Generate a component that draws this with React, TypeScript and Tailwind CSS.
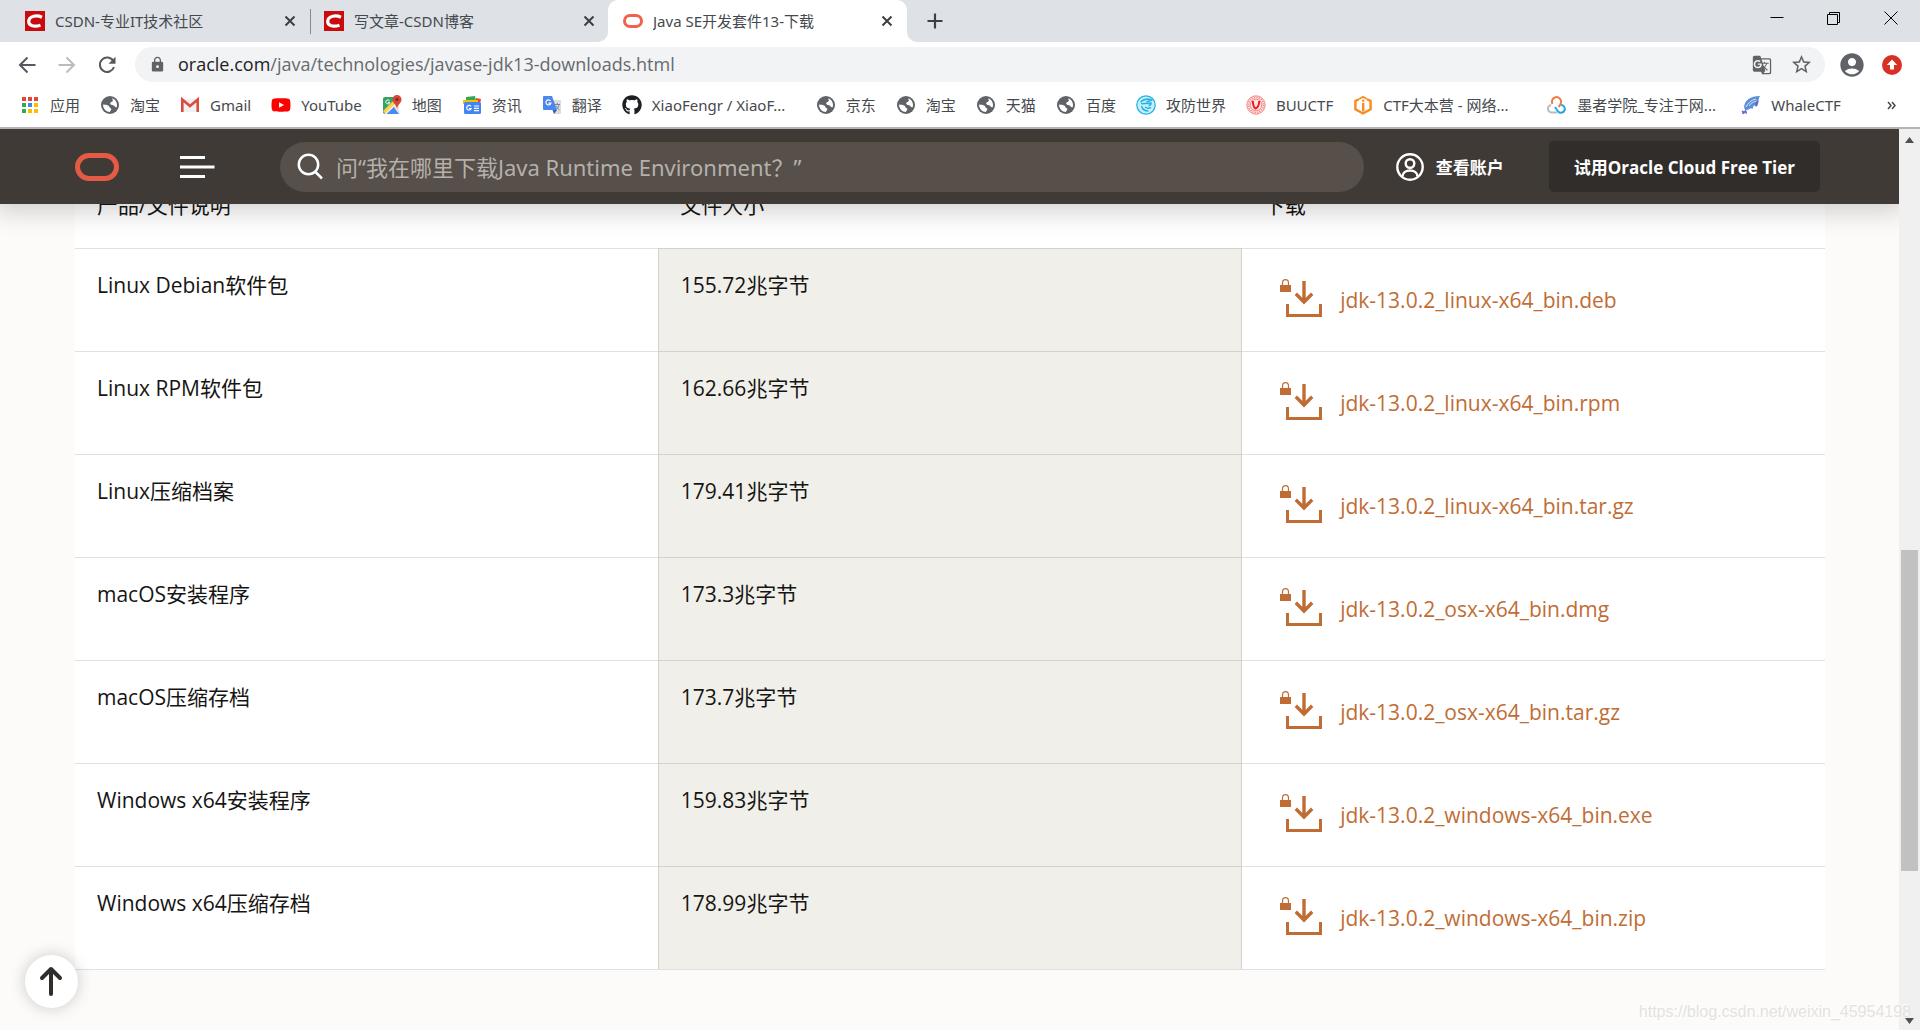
import type { ReactNode } from "react";
import { FaGithub, FaYoutube } from "react-icons/fa";
import { MdAccountCircle, MdGTranslate, MdLock, MdStarOutline } from "react-icons/md";

function CsdnIcon() {
  return (
    <svg width="20" height="20" viewBox="0 0 20 20">
      <rect width="20" height="20" fill="#c90b0e" />
      <path d="M17 6.2C12 3.8 4.3 4.6 3.7 10.2c-.4 4.900 5.800 6 11.800 4" fill="none" stroke="#fff" strokeWidth="3.200" />
    </svg>
  );
}

function OracleMark({ width, height, stroke, color }: { width: number; height: number; stroke: number; color: string }) {
  return (
    <svg width={width} height={height}>
      <rect
        x={stroke / 2}
        y={stroke / 2}
        width={width - stroke}
        height={height - stroke}
        rx={(height - stroke) / 2}
        fill="none"
        stroke={color}
        strokeWidth={stroke}
      />
    </svg>
  );
}

function CloseIcon() {
  return (
    <svg width="12" height="12" viewBox="0 0 12 12" stroke="#3c4043" strokeWidth="2">
      <path d="M1.500 1.500l9 9M10.500 1.500l-9 9" />
    </svg>
  );
}

function AppsIcon() {
  const colors = ["#ea4335", "#ea4335", "#ea4335", "#34a853", "#4285f4", "#fbbc05", "#34a853", "#fbbc05", "#fbbc05"];
  return (
    <svg width="18" height="18" viewBox="0 0 18 18">
      {colors.map((c, i) => (
        <rect key={i} x={1 + (i % 3) * 6} y={1 + Math.floor(i / 3) * 6} width="4" height="4" fill={c} />
      ))}
    </svg>
  );
}

function GlobeIcon() {
  return (
    <svg width="18" height="18" viewBox="0 0 18 18">
      <circle cx="9" cy="9" r="9" fill="#5f6368" />
      <path d="M11 2.200c3 .8 5 3.600 5 6.800 0 .8-.1 1.500-.4 2.200-1.200.2-1.800-.7-2.600-1.500-1-.9-2.700-.4-3.500-1.400-.7-1-.1-2 1-2.300 1-.3 1.600-.9 1.300-1.900-.2-.7-.7-1.200-.8-1.900z" fill="#fff" />
      <path d="M2 8.500c2 .2 4.200.2 5.600 1.300 1 .9.600 1.700 1.700 2.200 1.200.5 1.300 1.500.6 2.300-.6.6-.8 1.100-.9 1.700-3.900 0-7-3.200-7-7.500z" fill="#fff" />
    </svg>
  );
}

function GmailIcon() {
  return (
    <svg width="20" height="20" viewBox="0 0 20 20">
      <path d="M2 4h16v13H2z" fill="#f1f1f1" />
      <path d="M2.300 17V4.500L10 11l7.700-6.500V17" fill="none" stroke="#dd4b3e" strokeWidth="2.600" />
    </svg>
  );
}

function MapsIcon() {
  return (
    <svg width="20" height="20" viewBox="0 0 20 20">
      <rect x="1" y="2" width="16" height="17" rx="2" fill="#34a263" />
      <path d="M10 9l7-2v10a2 2 0 0 1-1 2z" fill="#e4e4e4" />
      <path d="M4 19l7-7.500 6 7.500z" fill="#4a8af4" />
      <path d="M1 16L12 5l3 3L3.500 19z" fill="#fbd04b" />
      <path d="M2.500 19L15 7l1 1L4.500 19z" fill="#f2f2f2" />
      <path d="M7.500 5.800a2 2 0 1 0 .3 1.600H6" fill="none" stroke="#fff" />
      <path d="M15 0a4.500 4.500 0 0 0-4.500 4.500c0 3.500 3.500 4.500 4.500 9 1-4.500 4.500-5.500 4.500-9A4.500 4.500 0 0 0 15 0z" fill="#dc4437" />
      <circle cx="15" cy="4.500" r="1.600" fill="#7d2720" />
    </svg>
  );
}

function NewsIcon() {
  return (
    <svg width="20" height="20" viewBox="0 0 20 20">
      <path d="M4 2l9-1 1 5H4z" fill="#34a853" />
      <path d="M14 3l5 1-1 5h-4z" fill="#ea4335" />
      <path d="M1 5h15v4H1z" fill="#fbbc05" />
      <rect x="2" y="7" width="17" height="12" rx="1.500" fill="#4285f4" />
      <path d="M9 11.500a2.300 2.300 0 1 0 .2 2H7M12 11h5M12 13.300h5M12 15.600h5" fill="none" stroke="#fff" strokeWidth="1.200" />
    </svg>
  );
}

function TranslateIcon() {
  return (
    <svg width="20" height="20" viewBox="0 0 20 20">
      <path d="M8 5h10a1 1 0 0 1 1 1v12a1 1 0 0 1-1 1h-6z" fill="#dcdcdc" />
      <path d="M1 2a1 1 0 0 1 1-1h8l5 14H2a1 1 0 0 1-1-1z" fill="#4a87ee" />
      <path d="M10.500 15l1.500 4 3-4z" fill="#2f5fc4" />
      <path d="M8.500 6a2.500 2.500 0 1 0 .3 2.200h-2.300" fill="none" stroke="#fff" strokeWidth="1.200" />
      <path d="M13 9.500h5M15.400 8v1.500M17 9.500c-.5 3-1.500 4-2.500 5M14.500 11c.5 2 1.500 3 3 4" fill="none" stroke="#7b8a98" />
    </svg>
  );
}

function AttackIcon() {
  return (
    <svg width="20" height="20" viewBox="0 0 20 20" fill="none" stroke="#25b3e4">
      <circle cx="10" cy="10" r="9.200" fill="#c9effb" strokeWidth="1.300" />
      <path d="M4.500 7c3-3 7-3.500 11-2-2 1-4 1.200-5 2.200M5 8.500c3 .5 5-.5 7 0l3-.5c0 1.500-1 2.500-2.500 2.500M5.500 11c1 3.500 3.500 5 7 5M9 12c2 1.500 4 1.500 6 .5" strokeWidth="1.500" />
    </svg>
  );
}

function BuuIcon() {
  return (
    <svg width="20" height="20" viewBox="0 0 20 20" fill="none" stroke="#f58a8a">
      <circle cx="10" cy="10" r="9.200" fill="#fde4e4" />
      <circle cx="10" cy="10" r="7.600" strokeWidth="1.800" strokeDasharray="1.200 1.200" />
      <circle cx="10" cy="10" r="5.800" />
      <path d="M6.800 6c.2 3.500 1 6.500 2.600 7.500 2-.5 3.600-4 3.900-7.500" stroke="#f01818" strokeWidth="2" />
    </svg>
  );
}

function CtfIcon() {
  return (
    <svg width="20" height="20" viewBox="0 0 20 20" fill="none" stroke="#f78b1f" strokeWidth="2.400">
      <path d="M6 4.200L2.400 6v8.300L10 18.500l7.600-4.200V6L14 4.200" />
      <path d="M6.200 4L10 1.700 13.800 4" strokeWidth="1.800" />
      <path d="M10.200 8v8.500" />
      <path d="M10.200 4.600v2.200" strokeWidth="2.200" />
    </svg>
  );
}

function MozheIcon() {
  return (
    <svg width="20" height="20" viewBox="0 0 20 20" fill="none" strokeWidth="2">
      <path d="M5.500 9A4.600 4.600 0 1 1 14 7.500c0 1.500-1 3-2.500 4.500" stroke="#f07b45" />
      <path d="M10 17.500H5.500A3.800 3.800 0 0 1 4 10" stroke="#b9bcc0" />
      <path d="M14 10a3.900 3.900 0 1 1-3 6.500L8 12" stroke="#20a9df" />
    </svg>
  );
}

function WhaleIcon() {
  return (
    <svg width="20" height="20" viewBox="0 0 20 20">
      <path d="M3 12C4 5 9 1 19 1c-1 2-1.500 3-1.500 5 0 3-1 5-2.500 6-.5-1-1.500-2-2.500-1l-1 3c-1-1-2-1-3 0s-3 0-4 2z" fill="#5b8fd6" />
      <path d="M5 12c2-4 5-7 10-8M8 11c2-3 4-4 8-5" stroke="#d9e6fa" fill="none" />
      <path d="M14.500 7.500l2.500-1.500-1.500 5zM1 16l2 .5 2-1 .5 3L4 17.500 2 19z" stroke="#6a5fd8" fill="#6a5fd8" strokeWidth=".8" />
    </svg>
  );
}

const bookmarks: { icon: ReactNode; label: string; long?: boolean }[] = [
  { icon: <AppsIcon />, label: "应用" },
  { icon: <GlobeIcon />, label: "淘宝" },
  { icon: <GmailIcon />, label: "Gmail" },
  { icon: <FaYoutube size={20} color="#f00" />, label: "YouTube" },
  { icon: <MapsIcon />, label: "地图" },
  { icon: <NewsIcon />, label: "资讯" },
  { icon: <TranslateIcon />, label: "翻译" },
  { icon: <FaGithub size={20} color="#1b1f23" />, label: "XiaoFengr / XiaoF...", long: true },
  { icon: <GlobeIcon />, label: "京东" },
  { icon: <GlobeIcon />, label: "淘宝" },
  { icon: <GlobeIcon />, label: "天猫" },
  { icon: <GlobeIcon />, label: "百度" },
  { icon: <AttackIcon />, label: "攻防世界" },
  { icon: <BuuIcon />, label: "BUUCTF" },
  { icon: <CtfIcon />, label: "CTF大本营 - 网络...", long: true },
  { icon: <MozheIcon />, label: "墨者学院_专注于网...", long: true },
  { icon: <WhaleIcon />, label: "WhaleCTF" },
];

const downloads = [
  { name: "Linux Debian软件包", size: "155.72兆字节", file: "jdk-13.0.2_linux-x64_bin.deb" },
  { name: "Linux RPM软件包", size: "162.66兆字节", file: "jdk-13.0.2_linux-x64_bin.rpm" },
  { name: "Linux压缩档案", size: "179.41兆字节", file: "jdk-13.0.2_linux-x64_bin.tar.gz" },
  { name: "macOS安装程序", size: "173.3兆字节", file: "jdk-13.0.2_osx-x64_bin.dmg" },
  { name: "macOS压缩存档", size: "173.7兆字节", file: "jdk-13.0.2_osx-x64_bin.tar.gz" },
  { name: "Windows x64安装程序", size: "159.83兆字节", file: "jdk-13.0.2_windows-x64_bin.exe" },
  { name: "Windows x64压缩存档", size: "178.99兆字节", file: "jdk-13.0.2_windows-x64_bin.zip" },
];

function InactiveTab({ title }: { title: string }) {
  return (
    <div className="flex h-full w-[299px] items-center pr-[3px] pl-[25px]">
      <CsdnIcon />
      <span className="ml-2.5 flex-1 truncate">{title}</span>
      <button aria-label={`关闭 ${title}`}>
        <CloseIcon />
      </button>
    </div>
  );
}

function TabStrip() {
  return (
    <div className="flex h-[42px] items-center bg-[#dee1e6] font-['Noto_Sans','Noto_Sans_CJK_SC',sans-serif] text-[15px] text-[#45494d]">
      <InactiveTab title="CSDN-专业IT技术社区" />
      <div className="-mr-px ml-[11px] h-[25px] w-px bg-[#85888c]" />
      <div className="-ml-[11px]">
        <InactiveTab title="写文章-CSDN博客" />
      </div>
      <div className="relative ml-[10px] flex h-full w-[299px] items-center rounded-t-[10px] bg-white pr-3.5 pl-[15px]">
        <svg className="absolute bottom-0 -left-2.5" width="10" height="10" fill="#fff">
          <path d="M10 0v10H0A10 10 0 0 0 10 0z" />
        </svg>
        <svg className="absolute -right-2.5 bottom-0" width="10" height="10" fill="#fff">
          <path d="M0 0v10h10A10 10 0 0 1 0 0z" />
        </svg>
        <OracleMark width={20} height={14} stroke={3} color="#f0624d" />
        <span className="ml-2.5 flex-1 truncate">Java SE开发套件13-下载</span>
        <button aria-label="关闭 Java SE开发套件13-下载">
          <CloseIcon />
        </button>
      </div>
      <button aria-label="新标签页" className="ml-5">
        <svg width="16" height="16" stroke="#3c4043" strokeWidth="2.200">
          <path d="M8 .5v15M.5 8h15" />
        </svg>
      </button>
      <div className="mb-1.5 ml-auto flex items-center gap-[43px] pr-[22px]">
        <button aria-label="最小化">
          <svg width="14" height="14" stroke="#000">
            <path d="M.5 6.500h13" />
          </svg>
        </button>
        <button aria-label="还原">
          <svg width="14" height="14" fill="none" stroke="#000">
            <path d="M.5 3.500h10v10H.5zM2.500 3.500v-2h10v10h-2" />
          </svg>
        </button>
        <button aria-label="关闭窗口">
          <svg width="14" height="14" stroke="#000">
            <path d="M.5 .5l13 13M13.500 .5l-13 13" />
          </svg>
        </button>
      </div>
    </div>
  );
}

function Toolbar() {
  return (
    <div className="flex h-[45px] items-center px-[18px]">
      <div className="flex items-center gap-[22px]">
        <button aria-label="后退">
          <svg width="18" height="18" fill="none" stroke="#55595e" strokeWidth="2">
            <path d="M17.500 9H2M9.500 1.500L2 9l7.500 7.500" />
          </svg>
        </button>
        <button aria-label="前进">
          <svg width="18" height="18" fill="none" stroke="#babcbe" strokeWidth="2">
            <path d="M.5 9H16M8.500 1.500L16 9l-7.500 7.500" />
          </svg>
        </button>
        <button aria-label="重新加载">
          <svg width="18" height="18" fill="none" stroke="#55595e" strokeWidth="2">
            <path d="M15.300 5A7.200 7.200 0 1 0 16 11" />
            <path d="M17.500 .8v7h-7z" fill="#55595e" stroke="none" />
          </svg>
        </button>
      </div>
      <div className="ml-[19px] flex h-[35px] flex-1 items-center rounded-full bg-[#f1f3f4] pr-3 pl-3.5">
        <MdLock size={17} color="#5f6368" />
        <a href="https://www.oracle.com/java/technologies/javase-jdk13-downloads.html" className="ml-3 flex-1 text-[18px] text-[#666a6e]">
          <span className="text-[#202124]">oracle.com</span>/java/technologies/javase-jdk13-downloads.html
        </a>
        <button aria-label="翻译此页">
          <MdGTranslate size={20} color="#5f6368" />
        </button>
        <button aria-label="为此网页添加书签" className="ml-[18px]">
          <MdStarOutline size={23} color="#5f6368" />
        </button>
      </div>
      <button aria-label="个人资料" className="ml-[13px]">
        <MdAccountCircle size={28} color="#5f6368" />
      </button>
      <button aria-label="更新" className="ml-4">
        <svg width="20" height="20" viewBox="0 0 20 20">
          <circle cx="10" cy="10" r="10" fill="#d93025" />
          <path d="M10 4.500L4.800 10H8v4.500h4V10h3.200z" fill="#fff" />
        </svg>
      </button>
    </div>
  );
}

function BookmarksBar() {
  return (
    <nav className="flex h-10 items-center pb-1 pl-5 font-['Noto_Sans','Noto_Sans_CJK_SC',sans-serif] text-[15px] text-[#45494d]">
      <div className="flex items-center gap-5">
        {bookmarks.map((b, i) => (
          <a key={i} href="#" className="flex items-center gap-2.5 whitespace-nowrap">
            <span className="flex w-5 justify-center">{b.icon}</span>
            <span className={b.long ? "w-[144px] truncate" : undefined}>{b.label}</span>
          </a>
        ))}
      </div>
      <button aria-label="更多书签" className="mr-6 ml-auto">
        <svg width="9" height="9" fill="none" stroke="#45494d" strokeWidth="1.500">
          <path d="M1 1l3 3.500L1 8M5 1l3 3.500L5 8" />
        </svg>
      </button>
    </nav>
  );
}

function SiteHeader() {
  return (
    <header className="relative z-10 flex h-[75px] items-center bg-[#3f3a36] pr-[79px] pl-[75px] shadow-[0_0_26px_6px_rgba(0,0,0,0.2)]">
      <a href="#" aria-label="Oracle">
        <OracleMark width={44} height={28} stroke={5} color="#e55a45" />
      </a>
      <button aria-label="菜单" className="ml-[61px]">
        <svg width="35" height="24" stroke="#fff" strokeWidth="3">
          <path d="M0 2.500h25M0 12h34.500M0 21.500h25" />
        </svg>
      </button>
      <div className="ml-[65px] flex h-[50px] flex-1 items-center rounded-full bg-[#564f4a] pl-[17px]">
        <svg width="27" height="27" fill="none" stroke="#fff" strokeWidth="2.500">
          <circle cx="11.500" cy="11.500" r="9.700" />
          <path d="M18 18.500l7 7" />
        </svg>
        <input
          type="text"
          aria-label="搜索"
          placeholder="问“我在哪里下载Java Runtime Environment？”"
          className="ml-3 flex-1 bg-transparent pt-0.5 font-['Noto_Sans','Noto_Sans_CJK_SC',sans-serif] text-[22px] outline-none placeholder:text-[#b5b0ab]"
        />
      </div>
      <a href="#" className="ml-8 flex items-center gap-3 text-[17px] font-bold text-white">
        <svg width="28" height="28" fill="none" stroke="#fff" strokeWidth="2.400">
          <circle cx="14" cy="14" r="12.700" />
          <circle cx="14" cy="10.500" r="4.300" />
          <path d="M6.500 23.500c0-8 15-8 15 0" />
        </svg>
        <span className="pt-0.5">查看账户</span>
      </a>
      <a href="#" className="ml-[45px] flex h-[51px] items-center rounded-[5px] bg-[#312d2a] px-[25px] pt-0.5 text-[17px] font-bold text-white">
        试用Oracle Cloud Free Tier
      </a>
    </header>
  );
}

function DownloadIcon() {
  return (
    <svg width="42" height="38" viewBox="0 0 42 38" fill="none" stroke="#bf6d35">
      <rect x="0" y="6" width="11" height="7" fill="#bf6d35" stroke="none" />
      <path d="M2.500 6V4a3 3.300 0 0 1 6 0v2" strokeWidth="1.200" />
      <path d="M24 2v21M15.800 14.800L24 23l8.200-8.200" strokeWidth="3.400" />
      <path d="M7.500 25v11.500h33V25" strokeWidth="3" />
    </svg>
  );
}

function DownloadTable() {
  return (
    <table className="-mt-10 w-full table-fixed border-collapse bg-white text-[21px] leading-7 text-[#161513]">
      <thead>
        <tr className="h-[84px] border-b border-black/12 text-left">
          <th className="px-[22px] pb-0.5 font-normal">产品/文件说明</th>
          <th className="px-[22px] pb-0.5 font-normal">文件大小</th>
          <th className="px-[22px] pb-0.5 font-normal">下载</th>
        </tr>
      </thead>
      <tbody>
        {downloads.map((d) => (
          <tr key={d.file} className="h-[103px] border-b border-black/12 align-top">
            <td className="px-[22px] pt-[22px]">{d.name}</td>
            <td className="border-x border-black/12 bg-[#f1efea] px-[22px] pt-[22px]">{d.size}</td>
            <td className="px-[38px] pt-[30px]">
              <a href="#" className="flex items-center gap-[18px] text-[#bf6d35]">
                <DownloadIcon />
                <span className="pt-1">{d.file}</span>
              </a>
            </td>
          </tr>
        ))}
      </tbody>
    </table>
  );
}

function Scrollbar() {
  return (
    <div className="flex w-[21px] flex-col items-center bg-[#f0f0f0] pt-2 pb-1.5">
      <svg width="9" height="6" fill="#505050">
        <path d="M4.500 0L9 6H0z" />
      </svg>
      <div className="flex w-[17px] flex-1 flex-col">
        <div className="flex-[407]" />
        <div className="flex-[321] bg-[#c1c1c1]" />
        <div className="flex-[147]" />
      </div>
      <svg width="9" height="6" fill="#505050">
        <path d="M4.500 6L0 0h9z" />
      </svg>
    </div>
  );
}

export default function App() {
  return (
    <div className="flex h-screen flex-col overflow-hidden bg-white font-['Open_Sans','Noto_Sans_CJK_SC',sans-serif]">
      <TabStrip />
      <Toolbar />
      <BookmarksBar />
      <div className="relative flex min-h-0 flex-1 border-t-2 border-[#b5b3b8]">
        <div className="flex min-w-0 flex-1 flex-col overflow-hidden bg-[#fcfbfa]">
          <SiteHeader />
          <main className="pr-[74px] pl-[75px]">
            <DownloadTable />
          </main>
        </div>
        <Scrollbar />
        <button
          aria-label="返回顶部"
          className="absolute bottom-[22px] left-[25px] z-20 flex size-[53px] items-center justify-center rounded-full bg-white shadow-[0_0_16px_rgba(0,0,0,0.2)]"
        >
          <svg width="25" height="31" fill="none" stroke="#312d2a" strokeWidth="4" strokeLinecap="round" strokeLinejoin="round">
            <path d="M12 28V3M3 12l9-9 9 9" />
          </svg>
        </button>
        <span className="absolute right-[9px] bottom-1.5 z-20 font-['Liberation_Sans',sans-serif] text-[16px] text-[#e3e2e1] [text-shadow:-1px_-1px_0_#fff]">
          https://blog.csdn.net/weixin_45954198
        </span>
      </div>
    </div>
  );
}
